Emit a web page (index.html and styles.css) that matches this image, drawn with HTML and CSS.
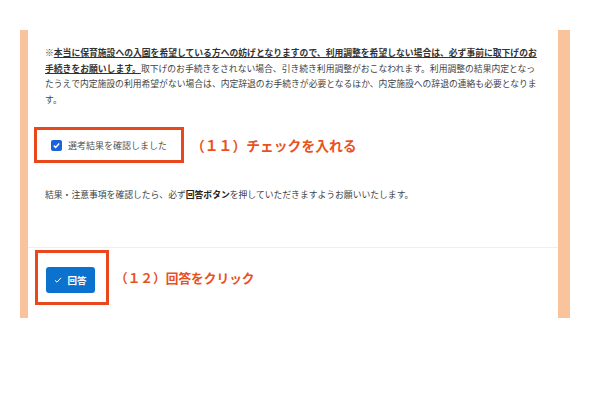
FILE: index.html
```html
<!DOCTYPE html>
<html lang="ja">
<head>
  <meta charset="UTF-8">
  <meta name="viewport" content="width=device-width, initial-scale=1">
  <title>選考結果の確認</title>
  <link rel="stylesheet" href="styles.css">
</head>
<body>
  <div class="frame">
    <div class="panel">
      <p class="notice">※<strong>本当に保育施設への入園を希望している方への妨げとなりますので、利用調整を希望しない場合は、必ず事前に取下げのお手続きをお願いします。</strong>取下げのお手続きをされない場合、引き続き利用調整がおこなわれます。利用調整の結果内定となったうえで内定施設の利用希望がない場合は、内定辞退のお手続きが必要となるほか、内定施設への辞退の連絡も必要となります。</p>

      <div class="step step-check">
        <div class="mark">
          <label class="check">
            <span class="box">
              <svg width="9" height="9" viewBox="0 0 9 9"><polyline points="1.8,4.6 3.7,6.4 7.2,2.6" fill="none" stroke="#fff" stroke-width="1.5"/></svg>
            </span>
            選考結果を確認しました
          </label>
        </div>
        <span class="note note-lg">（１１）チェックを入れる</span>
      </div>

      <p class="remind">結果・注意事項を確認したら、必ず<b>回答ボタン</b>を押していただきますようお願いいたします。</p>

      <div class="divider"></div>

      <div class="step step-answer">
        <div class="mark mark-btn">
          <button class="answer">
            <svg width="8" height="8" viewBox="0 0 8 8"><polyline points="1,4.3 3,6.2 7,1.8" fill="none" stroke="#fff" stroke-width="1"/></svg>
            回答
          </button>
        </div>
        <span class="note">（１２）回答をクリック</span>
      </div>
    </div>
  </div>
</body>
</html>
```

FILE: styles.css
```css
body {
  margin: 0;
  background: #fff;
  font-family: "Noto Sans CJK JP", "Noto Sans", sans-serif;
  color: #444;
}
.frame {
  padding-top: 30px;
  padding-left: 20px;
}
.panel {
  width: 530px;
  border-left: 8px solid #f9c49c;
  border-right: 12px solid #f9c49c;
  padding: 15px 0 13px;
  background: #fff;
}
.notice {
  margin: 0 0 0 17px;
  width: 494px;
  font-size: 8.8px;
  line-height: 15.5px;
}
.notice strong {
  font-weight: bold;
  text-decoration: underline;
  color: #333;
}
.step {
  display: flex;
  align-items: center;
}
.step-check {
  margin-top: 20px;
  padding-left: 6px;
}
.mark {
  border: 3px solid #e9481c;
  height: 30px;
  display: flex;
  align-items: center;
  padding: 0 14px;
}
.check {
  display: flex;
  align-items: center;
  gap: 6px;
  font-size: 9px;
  color: #555;
}
.box {
  width: 11px;
  height: 11px;
  border-radius: 2px;
  background: #1c62d8;
  display: flex;
  align-items: center;
  justify-content: center;
}
.note {
  color: #e9521f;
  font-weight: bold;
  font-size: 12.7px;
  margin-left: 6px;
}
.note-lg {
  font-size: 13.8px;
  margin-left: 7px;
}
.remind {
  margin: 24px 0 0 17px;
  font-size: 8.8px;
  line-height: 15.5px;
}
.remind b {
  color: #222;
}
.divider {
  margin-top: 44px;
  height: 1px;
  background: #eeeeee;
}
.step-answer {
  margin-top: 2px;
  padding-left: 7px;
}
.mark-btn {
  height: auto;
  padding: 14px 11px 9px 8px;
}
.answer {
  width: 49px;
  height: 26px;
  border: none;
  border-radius: 3px;
  background: #0b73cf;
  color: #fff;
  font-family: inherit;
  font-size: 9.5px;
  font-weight: bold;
  display: flex;
  align-items: center;
  justify-content: center;
  gap: 5px;
  padding: 0;
}
```
